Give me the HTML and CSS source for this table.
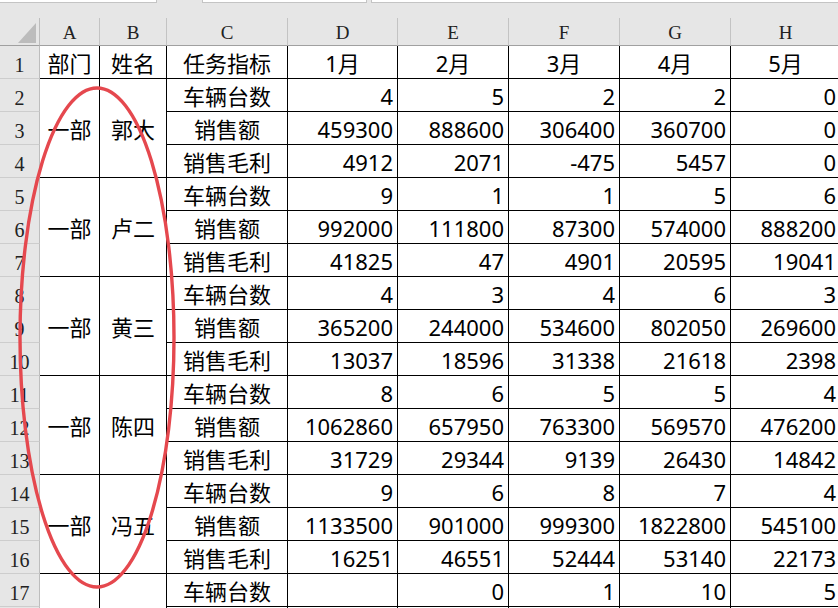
FILE: index.html
```html
<!DOCTYPE html>
<html lang="zh-CN">
<head>
<meta charset="utf-8">
<title>Sheet</title>
<link rel="stylesheet" href="styles.css">
</head>
<body>
<div class="topbar">
  <div class="box box1"></div>
  <div class="box box2"></div>
  <div class="box box3"></div>
</div>
<div class="sheet">
  <div class="corner"><svg width="18" height="20" viewBox="0 0 18 20"><polygon points="0,20 18,20 18,0" fill="#bcbcbc"/></svg></div>
  <div class="ch">A</div><div class="ch">B</div><div class="ch">C</div><div class="ch">D</div><div class="ch">E</div><div class="ch">F</div><div class="ch">G</div><div class="ch">H</div>

  <div class="rh">1</div><div class="c t">部门</div><div class="c t">姓名</div><div class="c t">任务指标</div><div class="c t">1月</div><div class="c t">2月</div><div class="c t">3月</div><div class="c t">4月</div><div class="c t">5月</div>

  <div class="rh">2</div><div class="c t m3">一部</div><div class="c t m3">郭大</div><div class="c t">车辆台数</div><div class="c n">4</div><div class="c n">5</div><div class="c n">2</div><div class="c n">2</div><div class="c n">0</div>
  <div class="rh">3</div><div class="c t">销售额</div><div class="c n">459300</div><div class="c n">888600</div><div class="c n">306400</div><div class="c n">360700</div><div class="c n">0</div>
  <div class="rh">4</div><div class="c t">销售毛利</div><div class="c n">4912</div><div class="c n">2071</div><div class="c n">-475</div><div class="c n">5457</div><div class="c n">0</div>

  <div class="rh">5</div><div class="c t m3">一部</div><div class="c t m3">卢二</div><div class="c t">车辆台数</div><div class="c n">9</div><div class="c n">1</div><div class="c n">1</div><div class="c n">5</div><div class="c n">6</div>
  <div class="rh">6</div><div class="c t">销售额</div><div class="c n">992000</div><div class="c n">111800</div><div class="c n">87300</div><div class="c n">574000</div><div class="c n">888200</div>
  <div class="rh">7</div><div class="c t">销售毛利</div><div class="c n">41825</div><div class="c n">47</div><div class="c n">4901</div><div class="c n">20595</div><div class="c n">19041</div>

  <div class="rh">8</div><div class="c t m3">一部</div><div class="c t m3">黄三</div><div class="c t">车辆台数</div><div class="c n">4</div><div class="c n">3</div><div class="c n">4</div><div class="c n">6</div><div class="c n">3</div>
  <div class="rh">9</div><div class="c t">销售额</div><div class="c n">365200</div><div class="c n">244000</div><div class="c n">534600</div><div class="c n">802050</div><div class="c n">269600</div>
  <div class="rh">10</div><div class="c t">销售毛利</div><div class="c n">13037</div><div class="c n">18596</div><div class="c n">31338</div><div class="c n">21618</div><div class="c n">2398</div>

  <div class="rh">11</div><div class="c t m3">一部</div><div class="c t m3">陈四</div><div class="c t">车辆台数</div><div class="c n">8</div><div class="c n">6</div><div class="c n">5</div><div class="c n">5</div><div class="c n">4</div>
  <div class="rh">12</div><div class="c t">销售额</div><div class="c n">1062860</div><div class="c n">657950</div><div class="c n">763300</div><div class="c n">569570</div><div class="c n">476200</div>
  <div class="rh">13</div><div class="c t">销售毛利</div><div class="c n">31729</div><div class="c n">29344</div><div class="c n">9139</div><div class="c n">26430</div><div class="c n">14842</div>

  <div class="rh">14</div><div class="c t m3">一部</div><div class="c t m3">冯五</div><div class="c t">车辆台数</div><div class="c n">9</div><div class="c n">6</div><div class="c n">8</div><div class="c n">7</div><div class="c n">4</div>
  <div class="rh">15</div><div class="c t">销售额</div><div class="c n">1133500</div><div class="c n">901000</div><div class="c n">999300</div><div class="c n">1822800</div><div class="c n">545100</div>
  <div class="rh">16</div><div class="c t">销售毛利</div><div class="c n">16251</div><div class="c n">46551</div><div class="c n">52444</div><div class="c n">53140</div><div class="c n">22173</div>

  <div class="rh">17</div><div class="c t m2"></div><div class="c t m2"></div><div class="c t">车辆台数</div><div class="c n"></div><div class="c n">0</div><div class="c n">1</div><div class="c n">10</div><div class="c n">5</div>
  <div class="rh"></div><div class="c t"></div><div class="c n"></div><div class="c n"></div><div class="c n"></div><div class="c n"></div><div class="c n"></div>
</div>
<svg class="ring" width="838" height="608" viewBox="0 0 838 608">
  <ellipse cx="97" cy="337.5" rx="77" ry="249.5" fill="none" stroke="#e5484e" stroke-width="3.4"/>
</svg>
</body>
</html>
```
FILE: styles.css
```css
html, body {
  margin: 0;
  padding: 0;
  background: #fff;
  overflow: hidden;
}
body {
  position: relative;
  width: 838px;
  height: 608px;
  font-family: "Noto Sans", "Noto Sans CJK SC", sans-serif;
  color: #000;
}
.topbar {
  height: 18px;
  background: #e6e6e6;
  display: flex;
  align-items: flex-start;
}
.box {
  height: 2px;
  background: #fff;
  border: 1px solid #c4c4c4;
  border-top: none;
}
.box1 { width: 156px; border-left: none; }
.box2 { width: 163px; margin-left: 45px; }
.box3 { flex: 1; margin-left: 4px; border-right: none; }

.sheet {
  display: grid;
  grid-template-columns: 40px 60px 67px 121px 110px 111px 111px 111px 110px;
  grid-template-rows: 28px;
  grid-auto-rows: 33px;
  width: max-content;
}
.corner {
  background: #e6e6e6;
  border-right: 1px solid #bdbdbd;
  border-bottom: 1px solid #a0a0a0;
  display: flex;
  align-items: flex-end;
  justify-content: flex-end;
  padding: 0 3px 2px 0;
}
.corner svg { display: block; }
.ch {
  background: #e6e6e6;
  border-right: 1px solid #c3c3c3;
  border-bottom: 1px solid #a0a0a0;
  display: flex;
  align-items: center;
  justify-content: center;
  font-family: "Liberation Serif", "DejaVu Serif", serif;
  font-size: 19px;
  color: #222;
  padding-top: 3px;
}
.rh {
  background: #e6e6e6;
  border-right: 1px solid #bdbdbd;
  border-bottom: 1px solid #cdcdcd;
  display: flex;
  align-items: center;
  justify-content: center;
  font-family: "Liberation Serif", "DejaVu Serif", serif;
  font-size: 20px;
  color: #222;
  padding-top: 7px;
}
.c {
  border-right: 1px solid #000;
  border-bottom: 1px solid #000;
  display: flex;
  align-items: center;
  font-size: 22px;
  line-height: 1;
  padding: 1px 4px 0 4px;
  white-space: nowrap;
  overflow: hidden;
}
.t { justify-content: center; }
.n { justify-content: flex-end; }
.m3 { grid-row: span 3; }
.m2 { grid-row: span 2; }

.ring {
  position: absolute;
  left: 0;
  top: 0;
  pointer-events: none;
}
```
